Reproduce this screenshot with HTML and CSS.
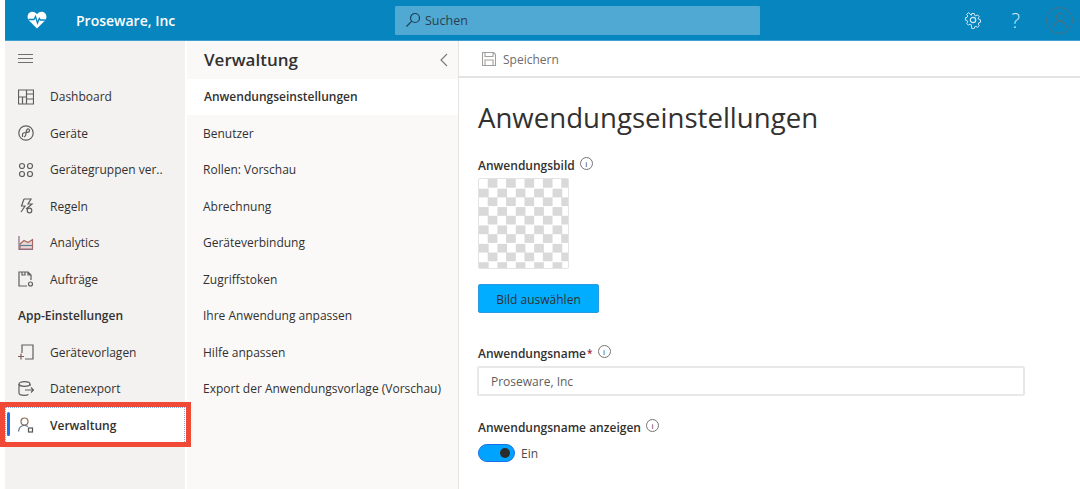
FILE: index.html
```html
<!DOCTYPE html>
<html lang="de">
<head>
  <meta charset="UTF-8" />
  <title>Proseware, Inc</title>
  <link rel="stylesheet" href="styles.css">
</head>
<body>

  <header class="topbar">
    <div class="brand">
      <svg class="brand-icon" width="20" height="18" viewBox="0 0 20 18">
        <path d="M10 17.500 2 9.500C-.6 6.800.5 1.500 4.500 .8 6.800 .4 8.800 1.400 10 3.200 11.200 1.400 13.200 .4 15.500 .8 19.500 1.500 20.600 6.800 18 9.500Z" fill="#fff"/>
        <path d="M1.500 8.500H7L8.500 5.500 10.500 12 12.300 7.500 13.300 9H18.500" fill="none" stroke="#0784bf" stroke-width="1.300"/>
      </svg>
      <span class="brand-name">Proseware, Inc</span>
    </div>
    <div class="search">
      <svg width="16" height="16" viewBox="0 0 16 16" fill="none" stroke="#1c3f55" stroke-width="1.200">
        <circle cx="10" cy="6" r="4.500"/>
        <path d="M6.800 9.200 1.500 14.500"/>
      </svg>
      <span>Suchen</span>
    </div>
    <div class="top-actions">
      <svg width="18" height="18" viewBox="0 0 18 18" fill="none" stroke="#d5eaf5" stroke-width="1.200">
        <circle cx="9" cy="9" r="2.700"/>
        <path d="M7.500 1.200h3l.5 2.300 1.600.7 2-1.300 2 2.100-1.200 2 .7 1.500 2.100.5v3l-2.100.5-.7 1.600 1.200 2-2 2-2-1.200-1.600.7-.5 2.100h-3L7 14.900l-1.600-.7-2 1.200-2-2 1.200-2-.7-1.600-2.100-.5v-3l2.100-.5.7-1.500-1.200-2 2-2.100 2 1.300L7 3.500Z" transform="translate(1.600 1.500) scale(.82)"/>
      </svg>
      <span class="help">?</span>
      <span class="avatar">
        <svg width="16" height="16" viewBox="0 0 16 16" fill="none" stroke="#4a6f85" stroke-width="1.100">
          <circle cx="8" cy="5" r="3.800"/>
          <path d="M1.500 15.500C2 11.500 4.500 9.500 8 9.500s6 2 6.500 6"/>
        </svg>
      </span>
    </div>
  </header>

  <div class="layout">
    <nav class="sidebar">
      <div class="hamburger"><span></span><span></span><span></span></div>
      <a class="nav-item">
        <svg class="nav-icon" viewBox="0 0 16 16"><path d="M.5 1h15v14H.5ZM.5 8h8M8.500 1v14M8.500 5h7M8.500 10h7M4.500 8v7"/></svg>
        Dashboard
      </a>
      <a class="nav-item">
        <svg class="nav-icon" viewBox="0 0 16 16"><circle cx="8" cy="8" r="7.200"/><path d="M4.500 12V9.500C4.500 8 6 7.500 8 7.500S11.500 7 11.500 5.500 10 3.500 9 4.500 8 7 8 8.500 7.500 11.500 6 12"/></svg>
        Geräte
      </a>
      <a class="nav-item">
        <svg class="nav-icon" viewBox="0 0 16 16"><circle cx="4" cy="4" r="2.500"/><circle cx="12" cy="4" r="2.500"/><circle cx="4" cy="12" r="2.500"/><circle cx="12" cy="12" r="2.500"/></svg>
        Gerätegruppen ver..
      </a>
      <a class="nav-item">
        <svg class="nav-icon" viewBox="0 0 16 16"><path d="M6 1h7L10 6h4L8 11M6 1 3.500 8H7L3 14"/><circle cx="11.500" cy="12.500" r="2.300"/></svg>
        Regeln
      </a>
      <a class="nav-item">
        <svg class="nav-icon" viewBox="0 0 16 16"><path d="M2 9 6 5.500 10 7.500 14.500 4.500V14H2Z" stroke="#a9675f" fill="#e8d9d6"/><path d="M1 1v13.500h14" stroke="#8a6d86"/><path d="M2 10.500h12.500" stroke="#5d7f9c"/></svg>
        Analytics
      </a>
      <a class="nav-item">
        <svg class="nav-icon" viewBox="0 0 16 16"><path d="M9 15H1V1h9l3 3v5M10 1v3h3M4 1v3h3V1"/><circle cx="12.500" cy="13" r="2"/></svg>
        Aufträge
      </a>
      <div class="nav-heading">App-Einstellungen</div>
      <a class="nav-item">
        <svg class="nav-icon" viewBox="0 0 16 16"><path d="M4 9V1h11v14H7"/><path d="M0 12.500h6M3 9.500v6" stroke="#7d5f5a"/></svg>
        Gerätevorlagen
      </a>
      <a class="nav-item">
        <svg class="nav-icon" viewBox="0 0 16 16"><ellipse cx="6.500" cy="3" rx="5.500" ry="2.300"/><path d="M1 3v9c0 1.300 2.500 2.300 5.500 2.300 1.500 0 3-.3 4-.8M12 3v2M7 9h8.500M13 6.500 15.500 9 13 11.500"/></svg>
        Datenexport
      </a>
      <a class="nav-item active">
        <span class="active-bar"></span>
        <svg class="nav-icon" viewBox="0 0 16 16"><circle cx="6.500" cy="4.500" r="3.500" stroke="#8a6d56"/><path d="M.5 14.500C1 10.500 3 8.500 6.500 8.500c1.500 0 2.500.3 3.500 1" stroke="#5d6f8c"/><rect x="10.500" y="11" width="4" height="4" stroke="#555"/></svg>
        Verwaltung
      </a>
      <div class="highlight"></div>
    </nav>

    <aside class="subnav">
      <div class="subnav-head">
        <h2>Verwaltung</h2>
        <svg width="8" height="14" viewBox="0 0 8 14" fill="none" stroke="#777" stroke-width="1.100"><path d="M7 1 1 7l6 6"/></svg>
      </div>
      <a class="subnav-item current">Anwendungseinstellungen</a>
      <a class="subnav-item">Benutzer</a>
      <a class="subnav-item">Rollen: Vorschau</a>
      <a class="subnav-item">Abrechnung</a>
      <a class="subnav-item">Geräteverbindung</a>
      <a class="subnav-item">Zugriffstoken</a>
      <a class="subnav-item">Ihre Anwendung anpassen</a>
      <a class="subnav-item">Hilfe anpassen</a>
      <a class="subnav-item">Export der Anwendungsvorlage (Vorschau)</a>
    </aside>

    <main class="content">
      <div class="commandbar">
        <svg width="14" height="14" viewBox="0 0 14 14" fill="none" stroke="#a19f9d" stroke-width="1.100">
          <path d="M.5.500h11l2 2v11H.5ZM3 .500v4h8v-4M3 13.500V8h8v5.500"/>
        </svg>
        <span>Speichern</span>
      </div>
      <div class="form">
        <h1>Anwendungseinstellungen</h1>

        <div class="label">Anwendungsbild <span class="info">i</span></div>
        <div class="image-box"></div>
        <button class="primary">Bild auswählen</button>

        <div class="label name-label">Anwendungsname<span class="req">*</span> <span class="info">i</span></div>
        <div class="text-input">Proseware, Inc</div>

        <div class="label toggle-label">Anwendungsname anzeigen <span class="info">i</span></div>
        <div class="toggle-row">
          <span class="toggle"><span class="knob"></span></span>
          <span>Ein</span>
        </div>
      </div>
    </main>
  </div>

</body>
</html>
```

FILE: styles.css
```css
* {
  box-sizing: border-box;
}

html, body {
  height: 100%;
}

body {
  margin: 0;
  padding-left: 5px;
  overflow: hidden;
  background: white;
  color: #323130;
  font-family: "Open Sans", "Noto Sans", sans-serif;
  font-size: 12px;
  display: flex;
  flex-direction: column;
}

.topbar {
  height: 41px;
  flex: none;
  background: #0785be;
  border-bottom: 1px solid #3f9fd0;
  display: flex;
  align-items: center;
  position: relative;
}

.brand {
  display: flex;
  align-items: center;
  width: 390px;
  flex: none;
  padding-left: 22px;
}

.brand-name {
  margin-left: 29px;
  color: white;
  font-size: 14px;
  font-weight: 600;
}

.search {
  width: 365px;
  height: 29px;
  background: #4fa9d3;
  border-radius: 1px;
  display: flex;
  align-items: center;
  gap: 4px;
  padding-left: 10px;
  color: #2d3e4c;
  font-size: 12.5px;
}

.top-actions {
  margin-left: auto;
  display: flex;
  align-items: center;
  padding-right: 7px;
}

.help {
  color: #d5eaf5;
  font-size: 20px;
  font-weight: 300;
  margin: 0 26px 0 30px;
}

.avatar {
  width: 27px;
  height: 27px;
  border: 1px solid #4a6f85;
  border-radius: 50%;
  display: flex;
  align-items: center;
  justify-content: center;
}

.layout {
  flex: 1;
  display: flex;
  min-height: 0;
}

.sidebar {
  width: 180px;
  flex: none;
  background: #f3f2f1;
  position: relative;
}

.hamburger {
  height: 37.500px;
  padding: 13px 0 0 13px;
}

.hamburger span {
  display: block;
  width: 15px;
  height: 1px;
  background: #716f6d;
  margin-bottom: 3px;
}

.nav-item, .nav-heading {
  height: 36.500px;
  display: flex;
  align-items: center;
}

.nav-item {
  padding-left: 13px;
  position: relative;
}

.nav-heading {
  padding-left: 13px;
  font-weight: 600;
}

.nav-icon {
  width: 16px;
  height: 16px;
  margin-right: 16px;
  flex: none;
  fill: none;
  stroke: #605e5c;
  stroke-width: 1.200;
}

.nav-item.active {
  background: white;
  font-weight: 600;
  outline: 1px dotted #8aa9d8;
  outline-offset: -1px;
}

.active-bar {
  position: absolute;
  left: 2px;
  top: 5px;
  width: 3px;
  height: 24px;
  border-radius: 2px;
  background: #1a6fe8;
}

.highlight {
  position: absolute;
  left: -5px;
  top: 361px;
  width: 191px;
  height: 45px;
  border: 5px solid #f04a37;
  pointer-events: none;
}

.subnav {
  width: 272px;
  flex: none;
  margin-left: 2px;
  background: #faf9f8;
  border-right: 1px solid #e5e4e2;
}

.subnav-head {
  height: 37.500px;
  display: flex;
  align-items: center;
  justify-content: space-between;
  padding: 0 10px 0 17px;
}

.subnav-head h2 {
  margin: 0;
  font-size: 17px;
  font-weight: 600;
}

.subnav-item {
  height: 36.500px;
  display: flex;
  align-items: center;
  padding-left: 16px;
}

.subnav-item.current {
  background: white;
  font-weight: 600;
  padding-left: 17px;
}

.content {
  flex: 1;
  min-width: 0;
}

.commandbar {
  height: 37px;
  border-bottom: 2px solid #e3e3e3;
  display: flex;
  align-items: center;
  gap: 7px;
  padding: 1px 0 0 23px;
  color: #6f6d6b;
}

.form {
  padding: 0 19px;
}

h1 {
  margin: 19px 0 0;
  font-size: 27.600px;
  font-weight: 400;
  line-height: 40px;
}

.label {
  font-weight: 600;
  line-height: 18px;
  display: flex;
  align-items: center;
  gap: 5px;
}

.form h1 + .label {
  margin-top: 20px;
}

.info {
  width: 13px;
  height: 13px;
  border: 1px solid #77736f;
  border-radius: 50%;
  font-size: 8px;
  font-weight: 400;
  line-height: 11px;
  text-align: center;
  margin-top: -5px;
}

.req {
  color: #a4262c;
  font-size: 10px;
  margin-left: -4px;
  margin-top: -3px;
}

.image-box {
  width: 91px;
  height: 91px;
  margin-top: 3px;
  border: 1px solid #e3e3e3;
  border-radius: 2px;
  background-color: white;
  background-image: conic-gradient(#d9d9d9 25%, white 25% 50%, #d9d9d9 50% 75%, white 75%);
  background-size: 18.400px 18.400px;
}

.primary {
  display: block;
  width: 121px;
  height: 29px;
  margin-top: 15px;
  border: 1px solid #2a9be0;
  border-radius: 2px;
  background: #00adfe;
  color: #323130;
  font: inherit;
  padding-top: 2px;
}

.name-label {
  margin-top: 32px;
}

.text-input {
  width: 548px;
  height: 30px;
  margin: 3px 0 0 -1px;
  border: 2px solid #e8e8e8;
  border-radius: 2px;
  padding-left: 12px;
  display: flex;
  align-items: center;
  color: #605e5c;
}

.toggle-label {
  margin-top: 23px;
}

.toggle-row {
  display: flex;
  align-items: center;
  gap: 6px;
  margin-top: 7px;
  color: #4d4b49;
}

.toggle {
  width: 37px;
  height: 18px;
  border: 1px solid #1a6fe8;
  border-radius: 9px;
  background: #00a4ff;
  display: flex;
  align-items: center;
  justify-content: flex-end;
  padding-right: 4px;
}

.knob {
  width: 10px;
  height: 10px;
  border-radius: 50%;
  background: #2b2b2b;
}
```
